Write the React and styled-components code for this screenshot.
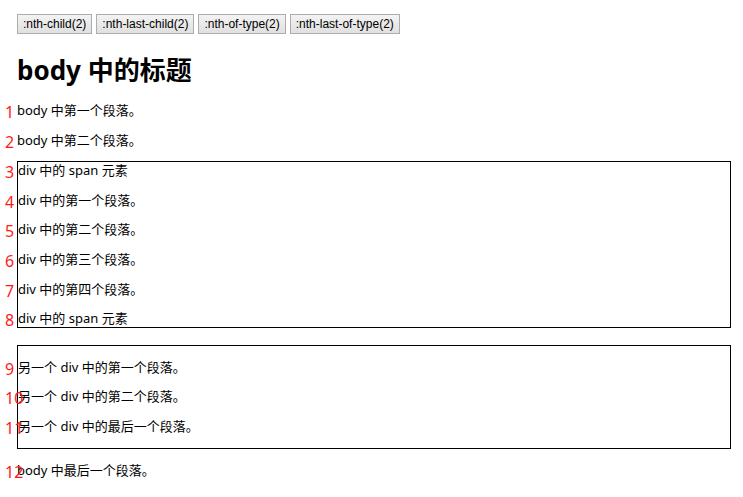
import React from 'react'
import styled, { createGlobalStyle } from 'styled-components'

const GlobalStyle = createGlobalStyle`
  html, body {
    margin: 0;
    background: #fff;
  }
  body {
    font-family: "Noto Sans", "Noto Sans CJK SC", sans-serif;
    font-size: 13px;
    color: #000;
  }
`

const Page = styled.div`
  position: relative;
  padding: 14px 12px 20px 17px;
`
const Toolbar = styled.div`
  display: flex;
  gap: 4px;
  height: 20px;
`
const Button = styled.button`
  font-family: "Liberation Sans", Arial, sans-serif;
  font-size: 12px;
  height: 20px;
  line-height: 18px;
  padding: 0 5px;
  border: 1px solid #adadad;
  background: linear-gradient(#f3f3f3, #e0e0e0);
  color: #000;
`
const Title = styled.h2`
  font-size: 26px;
  font-weight: 700;
  line-height: 34px;
  margin: 19px 0 15px;
`
const Para = styled.p`
  margin: 13px 0;
  line-height: 16.6px;
`
const Box = styled.div`
  border: 1px solid #000;
  margin: ${p => (p.$spaced ? '17px' : '13px')} 0 13px;
  line-height: 16.6px;
`
const Num = styled.span`
  position: absolute;
  left: 5px;
  margin-top: 2px;
  color: #ff1a1a;
  font-size: 16px;
  line-height: 16px;
`

const selectors = [':nth-child(2)', ':nth-last-child(2)', ':nth-of-type(2)', ':nth-last-of-type(2)']

const App = () => {
  return (
    <Page>
      <GlobalStyle />
      <Toolbar>
        {selectors.map(s => (
          <Button key={s}>{s}</Button>
        ))}
      </Toolbar>
      <Title>body 中的标题</Title>
      <Para><Num>1</Num>body 中第一个段落。</Para>
      <Para><Num>2</Num>body 中第二个段落。</Para>
      <Box>
        <span><Num>3</Num>div 中的 span 元素</span>
        <Para><Num>4</Num>div 中的第一个段落。</Para>
        <Para><Num>5</Num>div 中的第二个段落。</Para>
        <Para><Num>6</Num>div 中的第三个段落。</Para>
        <Para><Num>7</Num>div 中的第四个段落。</Para>
        <span><Num>8</Num>div 中的 span 元素</span>
      </Box>
      <Box $spaced>
        <Para><Num>9</Num>另一个 div 中的第一个段落。</Para>
        <Para><Num>10</Num>另一个 div 中的第二个段落。</Para>
        <Para><Num>11</Num>另一个 div 中的最后一个段落。</Para>
      </Box>
      <Para><Num>12</Num>body 中最后一个段落。</Para>
    </Page>
  )
}

export default App
